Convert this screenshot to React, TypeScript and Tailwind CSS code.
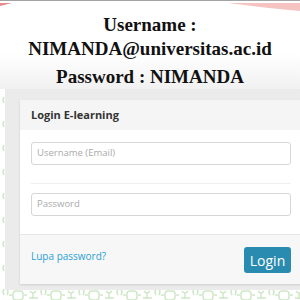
const Pattern = () => (
  <svg className="absolute inset-0 h-full w-full" aria-hidden="true">
    <defs>
      <pattern id="batik" width="38" height="24" patternUnits="userSpaceOnUse" x="6" y="288">
        <g fill="none" stroke="#cfe8c7" strokeWidth="1.5">
          <rect x="7" y="3" width="10" height="9" rx="3" />
          <path d="M3 7 h3 M18 7 h3" />
          <path d="M24 3 q3 4 6 0 M27 5 v6 M23 10 h9" />
          <path d="M1 1 q2 3 0 6 M36 1 q-2 3 0 6" />
        </g>
      </pattern>
    </defs>
    <rect x="0" y="0" width="300" height="300" fill="url(#batik)" />
  </svg>
);

export default function App() {
  return (
    <div className="relative h-[300px] w-[300px] overflow-hidden bg-white">
      <Pattern />

      <div className="relative flex h-[89px] flex-col bg-gradient-to-b from-white from-60% to-[#f1f1f1]">
        <div className="h-[3px] bg-[#a3a3a3]" />
        <svg className="absolute left-0 top-[3px] h-[8px] w-full" viewBox="0 0 300 8" preserveAspectRatio="none" aria-hidden="true">
          <path d="M0 0 L12 0 L0 3 Z" fill="#e98a8a" />
          <path d="M228 0 L300 0 L300 8 Q265 5 228 0 Z" fill="#f6c3c3" />
        </svg>
        <div className="pt-[12px] text-center font-['Liberation_Serif',serif] text-[19px] font-bold leading-[24px] text-[#111]">
          <div>Username :</div>
          <div>NIMANDA@universitas.ac.id</div>
          <div className="mt-[4px]">Password : NIMANDA</div>
        </div>
      </div>

      <div className="relative ml-[5px] h-[201px] bg-[#ebebeb] pl-[15px] pt-[11px]">
        <div className="w-[290px] bg-white font-['Open_Sans',sans-serif] shadow-[0_1px_2px_rgba(0,0,0,0.12)]">
          <div className="flex h-[30px] items-center bg-[#f5f5f5] px-[11px] text-[11px] font-bold text-[#333]">
            Login E-learning
          </div>
          <div className="px-[11px] pt-[12px]">
            <div className="flex h-[23px] w-[260px] items-center rounded-[3px] border border-[#d6d6d6] px-[5px] text-[9.5px] text-[#aaa]">
              Username (Email)
            </div>
            <div className="mt-[18px] h-px w-[260px] bg-[#f0f0f0]" />
            <div className="mt-[9px] flex h-[23px] w-[260px] items-center rounded-[3px] border border-[#d6d6d6] px-[5px] text-[9.5px] text-[#aaa]">
              Password
            </div>
          </div>
          <div className="mt-[18px] flex h-[50px] items-start justify-between border-t border-[#e6e6e6] bg-[#f7f7f7] pl-[11px] pr-[19px] pt-[12px]">
            <span className="mt-[2px] text-[10px] text-[#2a9fd6]">Lupa password?</span>
            <button className="h-[26px] w-[47px] rounded-[3px] bg-[#2a8bb0] text-[14px] text-white">
              Login
            </button>
          </div>
        </div>
      </div>
    </div>
  );
}
